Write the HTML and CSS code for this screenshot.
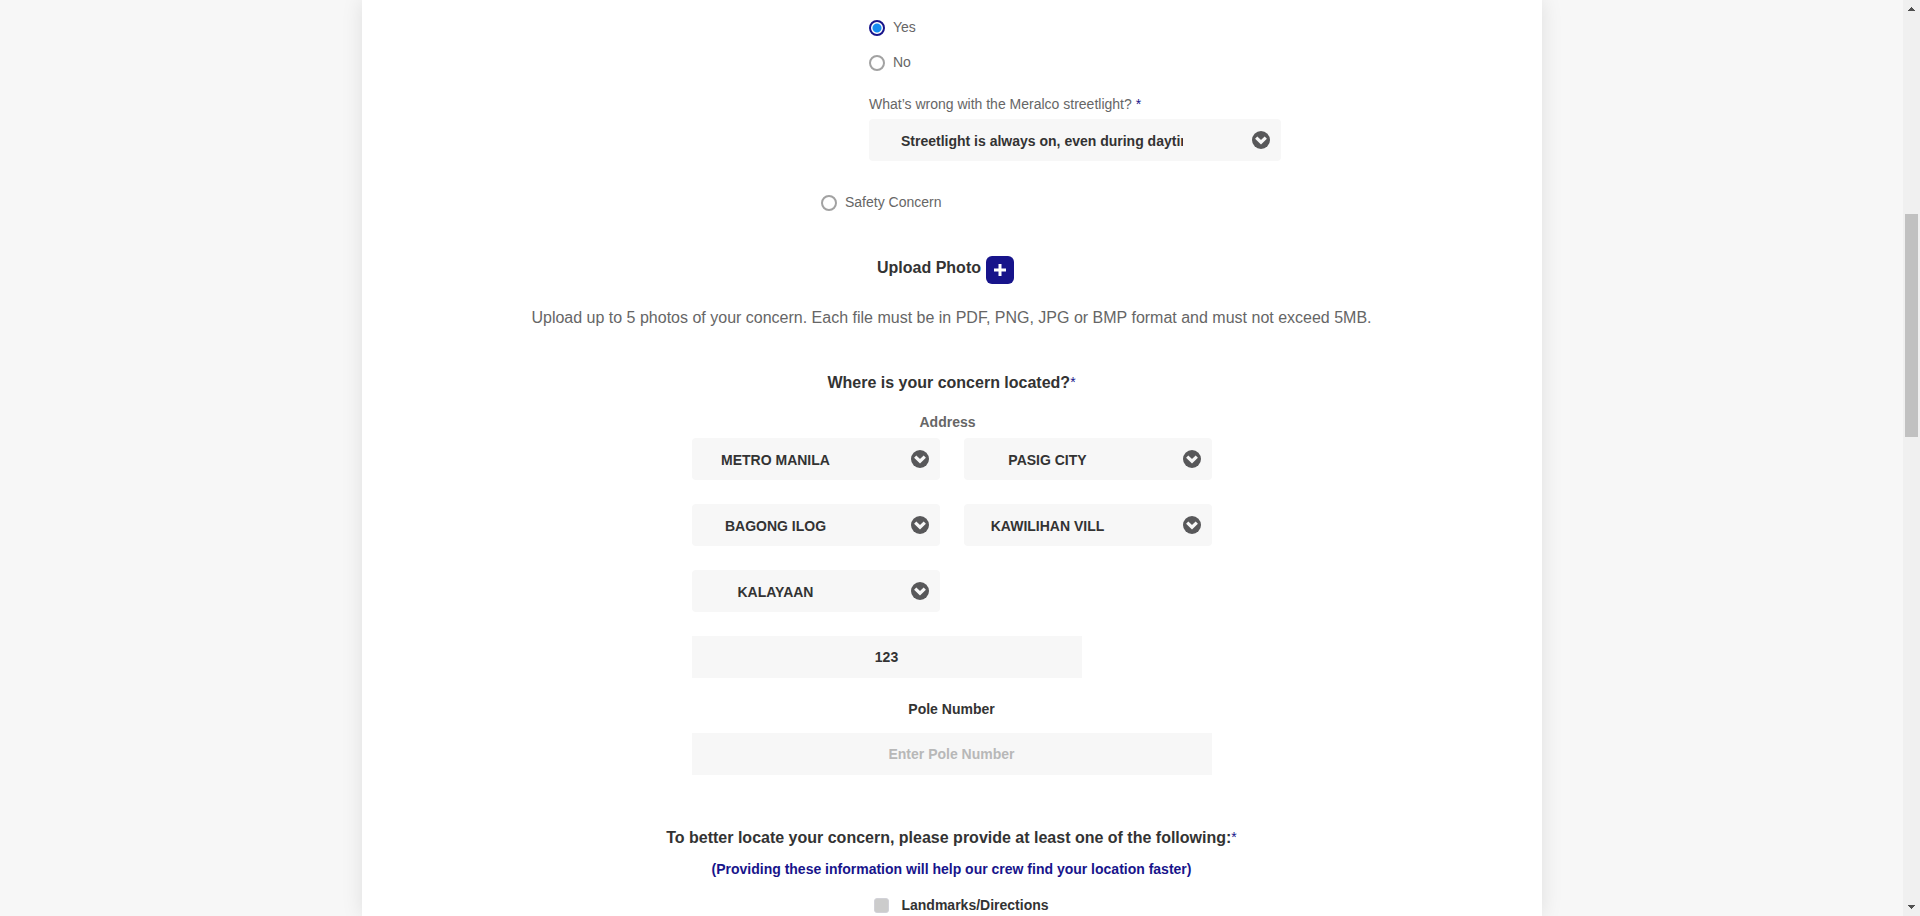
FILE: index.html
```html
<!DOCTYPE html>
<html lang="en">
<head>
<meta charset="utf-8">
<meta name="viewport" content="width=device-width, initial-scale=1">
<title>Report a Concern</title>
<link rel="stylesheet" href="styles.css">
</head>
<body>
<svg class="sprite" aria-hidden="true">
  <symbol id="chevron" viewBox="0 0 18 18">
    <circle cx="9" cy="9" r="9" fill="#58585a"/>
    <path d="M4.200 6.600 9 11.200l4.800-4.600" fill="none" stroke="#f7f7f7" stroke-width="3.200"/>
  </symbol>
</svg>
<div class="shell">
  <main class="page">
    <form class="card">
      <section class="concern">
        <div class="nested">
          <label class="radio"><input type="radio" name="meralco" checked>Yes</label>
          <label class="radio"><input type="radio" name="meralco">No</label>
          <label class="question" for="issue">What’s wrong with the Meralco streetlight? <span class="required">*</span></label>
          <div class="select select-wide">
            <select id="issue"><option>Streetlight is always on, even during daytime</option></select>
            <svg class="chevron" aria-hidden="true"><use href="#chevron"/></svg>
          </div>
        </div>
        <label class="radio"><input type="radio" name="concern">Safety Concern</label>
      </section>

      <section class="upload">
        <div class="upload-row">
          <span class="heading" id="upload-label">Upload Photo</span>
          <button class="add" type="button" aria-labelledby="upload-label">
            <svg class="plus" viewBox="0 0 12 12" aria-hidden="true"><path d="M6 0v12M0 6h12" stroke="#fff" stroke-width="3"/></svg>
          </button>
        </div>
        <p class="hint">Upload up to 5 photos of your concern. Each file must be in PDF, PNG, JPG or BMP format and must not exceed 5MB.</p>
      </section>

      <section class="location">
        <h2 class="heading">Where is your concern located?<span class="required mark">*</span></h2>
        <h3 class="address-title">Address</h3>
        <div class="fields">
          <div class="select">
            <select aria-label="Province"><option>METRO MANILA</option></select>
            <svg class="chevron" aria-hidden="true"><use href="#chevron"/></svg>
          </div>
          <div class="select">
            <select aria-label="City"><option>PASIG CITY</option></select>
            <svg class="chevron" aria-hidden="true"><use href="#chevron"/></svg>
          </div>
          <div class="select">
            <select aria-label="Barangay"><option>BAGONG ILOG</option></select>
            <svg class="chevron" aria-hidden="true"><use href="#chevron"/></svg>
          </div>
          <div class="select">
            <select aria-label="Subdivision"><option>KAWILIHAN VILL</option></select>
            <svg class="chevron" aria-hidden="true"><use href="#chevron"/></svg>
          </div>
          <div class="select">
            <select aria-label="Street"><option>KALAYAAN</option></select>
            <svg class="chevron" aria-hidden="true"><use href="#chevron"/></svg>
          </div>
          <div class="span-row"><input class="text house" type="text" aria-label="House number" value="123"></div>
        </div>
        <label class="pole-label" for="pole">Pole Number</label>
        <input class="text pole" id="pole" type="text" placeholder="Enter Pole Number">
      </section>

      <section class="details">
        <h2 class="heading">To better locate your concern, please provide at least one of the following:<span class="required mark">*</span></h2>
        <p class="note">(Providing these information will help our crew find your location faster)</p>
        <label class="check"><input type="checkbox">Landmarks/Directions</label>
      </section>
    </form>
  </main>
  <div class="scrollbar" aria-hidden="true">
    <svg class="arrow" viewBox="0 0 17 17"><path d="M8 7h1v1h1v1h1v1h1v1H5v-1h1V9h1V8h1z" fill="#505050"/></svg>
    <div class="track"><div class="before"></div><div class="thumb"></div><div class="after"></div></div>
    <svg class="arrow" viewBox="0 0 17 17"><path d="M5 6h7v1h-1v1h-1v1H9v1H8V9H7V8H6V7H5z" fill="#505050"/></svg>
  </div>
</div>
</body>
</html>
```
FILE: styles.css
```css
*, *::before, *::after { box-sizing: border-box; }

body {
  margin: 0;
  background: #f7f7f7;
  color: #666;
  font-family: "Liberation Sans", Arial, sans-serif;
  font-size: 14px;
  line-height: 20px;
}

h2, h3, p { margin: 0; }

.sprite { display: none; }

.shell {
  display: flex;
  height: 100vh;
  overflow: hidden;
}

.page {
  flex: 1;
  overflow: hidden;
}

.card {
  display: flex;
  flex-direction: column;
  align-items: center;
  width: 100%;
  max-width: 1180px;
  min-height: 100%;
  margin: 0 auto;
  padding-top: 17px;
  background: #fff;
  box-shadow: 0 0 20px rgba(0, 0, 0, 0.1);
}

/* Concern type */
.concern {
  display: flex;
  flex-direction: column;
  align-items: flex-start;
  gap: 31px;
  width: 460px;
  margin-left: 199px;
}

.nested {
  display: flex;
  flex-direction: column;
  width: 100%;
  padding-left: 48px;
}

.radio {
  display: flex;
  align-items: center;
  gap: 8px;
}

.nested .radio { margin-bottom: 15px; }

.radio input {
  flex: none;
  appearance: none;
  width: 16px;
  height: 16px;
  margin: 2px 0 0;
  border: 2px solid #a2a2a2;
  border-radius: 50%;
}

.radio input:checked {
  border-color: #17148b;
  background: radial-gradient(circle, #148cf0 4px, #fff 5px);
}

.question {
  margin-top: 7px;
  margin-bottom: 5px;
}

.required { color: #17148b; }

/* Fields */
.select { position: relative; }

.select select {
  display: block;
  appearance: none;
  width: 100%;
  height: 42px;
  padding: 2px 100px 0 20px;
  border: 0;
  border-radius: 4px;
  background: #f7f7f7;
  color: #333;
  font: bold 14px "Liberation Sans", Arial, sans-serif;
  text-align: center;
  text-align-last: center;
}

.select-wide select {
  padding-right: 98px;
  padding-left: 32px;
  text-align: left;
  text-align-last: left;
}

.chevron {
  position: absolute;
  top: 12px;
  right: 11px;
  width: 18px;
  height: 18px;
  pointer-events: none;
}

.text {
  display: block;
  width: 100%;
  height: 42px;
  padding: 0 12px;
  border: 0;
  background: #f7f7f7;
  color: #333;
  font: bold 14px "Liberation Sans", Arial, sans-serif;
  text-align: center;
}

.text::placeholder { color: #b8b8b8; }

.house { width: 75%; }

/* Upload */
.upload {
  margin-top: 44px;
  text-align: center;
}

.upload-row {
  display: flex;
  align-items: flex-start;
  justify-content: center;
  gap: 5px;
  padding-right: 12px;
}

.heading {
  color: #333;
  font-size: 16px;
  font-weight: bold;
  line-height: 24px;
}

.mark {
  font-size: 14px;
  font-weight: normal;
  line-height: 0;
  vertical-align: 1px;
}

.add {
  display: grid;
  place-items: center;
  width: 28px;
  height: 28px;
  padding: 0;
  border: 0;
  border-radius: 6px;
  background: #17148b;
}

.plus {
  width: 12px;
  height: 12px;
}

.hint {
  margin-top: 22px;
  font-size: 16px;
  line-height: 24px;
}

/* Location */
.location {
  display: flex;
  flex-direction: column;
  align-items: center;
  width: 520px;
  max-width: 100%;
  margin-top: 41px;
}

.address-title {
  margin: 17px 8px 6px 0;
  font-size: 14px;
}

.fields {
  display: grid;
  grid-template-columns: 1fr 1fr;
  gap: 24px;
  width: 100%;
}

.span-row { grid-column: 1 / -1; }

.pole-label {
  margin: 21px 0 14px;
  color: #333;
  font-weight: bold;
}

/* Further details */
.details {
  display: flex;
  flex-direction: column;
  align-items: center;
  margin-top: 51px;
}

.note {
  margin-top: 9px;
  color: #17148b;
  font-weight: bold;
}

.check {
  display: flex;
  align-items: center;
  gap: 12px;
  margin-top: 16px;
  padding-left: 20px;
  color: #333;
  font-weight: bold;
}

.check input {
  appearance: none;
  width: 15px;
  height: 15px;
  margin: 1px 0 0;
  border: 1px solid #d2d2d8;
  border-radius: 3px;
  background: #ccc;
}

/* Scrollbar */
.scrollbar {
  display: flex;
  flex: none;
  flex-direction: column;
  width: 17px;
  background: #f0f0f0;
}

.arrow {
  flex: none;
  width: 17px;
  height: 17px;
}

.track {
  display: flex;
  flex: 1;
  flex-direction: column;
  padding: 0 2px;
}

.before { flex: 197; }

.thumb {
  flex: 223;
  background: #c1c1c1;
}

.after { flex: 462; }
```
